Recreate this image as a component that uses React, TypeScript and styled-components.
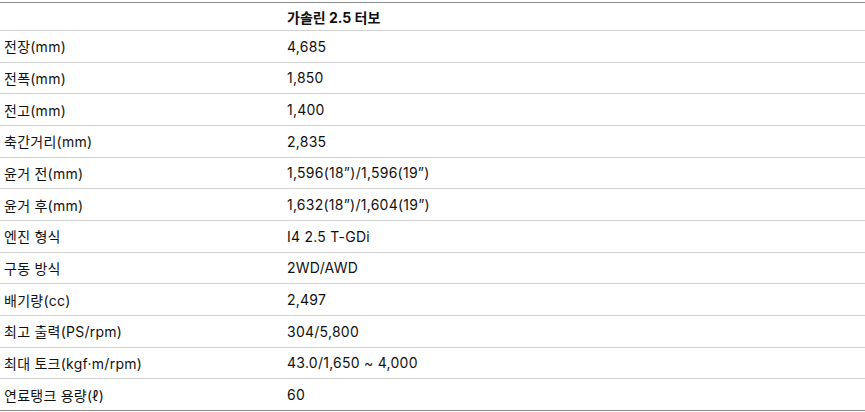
import React from "react";
import styled, { createGlobalStyle } from "styled-components";

interface SpecRow {
  label: string;
  value: string;
}

const specs: SpecRow[] = [
  { label: "전장(mm)", value: "4,685" },
  { label: "전폭(mm)", value: "1,850" },
  { label: "전고(mm)", value: "1,400" },
  { label: "축간거리(mm)", value: "2,835" },
  { label: "윤거 전(mm)", value: "1,596(18”)/1,596(19”)" },
  { label: "윤거 후(mm)", value: "1,632(18”)/1,604(19”)" },
  { label: "엔진 형식", value: "I4 2.5 T-GDi" },
  { label: "구동 방식", value: "2WD/AWD" },
  { label: "배기량(cc)", value: "2,497" },
  { label: "최고 출력(PS/rpm)", value: "304/5,800" },
  { label: "최대 토크(kgf·m/rpm)", value: "43.0/1,650 ~ 4,000" },
  { label: "연료탱크 용량(ℓ)", value: "60" },
];

const GlobalStyle = createGlobalStyle`
  html, body {
    margin: 0;
    padding: 0;
    background: #ffffff;
  }
  body {
    font-family: Inter, "Noto Sans CJK KR", sans-serif;
    color: #111111;
  }
`;

const App: React.FC = () => {
  return (
    <>
      <GlobalStyle />
      <StyledSpecTable>
        <div className="row head">
          <div className="cell" />
          <div className="cell">가솔린 2.5 터보</div>
        </div>
        {specs.map((spec) => {
          return (
            <div className="row" key={spec.label}>
              <div className="cell">{spec.label}</div>
              <div className="cell">{spec.value}</div>
            </div>
          );
        })}
      </StyledSpecTable>
    </>
  );
};

const StyledSpecTable = styled.div`
  margin-top: 2px;
  width: 865px;
  border-top: 1px solid #8c8c8c;
  border-bottom: 1px solid #8c8c8c;

  .row {
    display: grid;
    grid-template-columns: 283px 1fr;
    align-items: center;
    height: 30.67px;
    border-top: 1px solid #d0d0d0;
    font-size: 14px;
    letter-spacing: 0.25px;

    &.head {
      height: 27px;
      border-top: none;
      font-weight: 700;
      letter-spacing: 0;
    }

    .cell {
      padding: 0 4px;
      white-space: nowrap;
    }
  }
`;

export default App;
